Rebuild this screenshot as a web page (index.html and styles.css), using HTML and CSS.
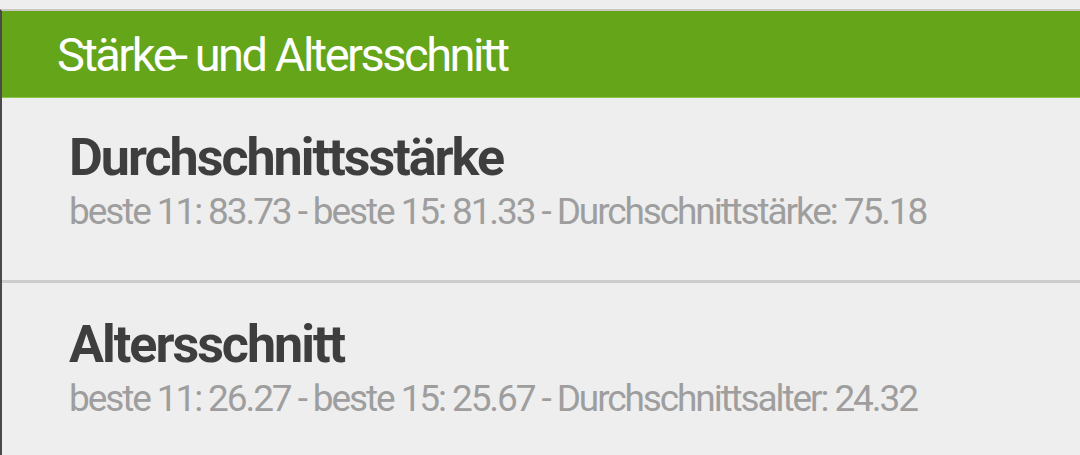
FILE: index.html
```html
<!DOCTYPE html>
<html lang="de">

<head>
    <meta charset="UTF-8">
    <meta name="viewport" content="width=device-width, initial-scale=1.0">
    <title>Stärke- und Altersschnitt</title>
    <link rel="stylesheet" href="styles.css">
</head>

<body>
    <div class="panel">
        <div class="panel-header">Stärke- und Altersschnitt</div>

        <div class="stat">
            <div class="stat-title">Durchschnittsstärke</div>
            <div class="stat-text">beste 11: 83.73 - beste 15: 81.33 - Durchschnittstärke: 75.18</div>
        </div>

        <div class="stat">
            <div class="stat-title">Altersschnitt</div>
            <div class="stat-text">beste 11: 26.27 - beste 15: 25.67 - Durchschnittsalter: 24.32</div>
        </div>
    </div>
</body>

</html>
```

FILE: styles.css
```css
body {
    height: 100vh;
    padding: 0;
    margin: 0;
    overflow: hidden;
    font-family: Roboto, "Noto Sans", sans-serif;
    background-color: #eeeeee;
}

.panel {
    margin-top: 9px;
    height: 100%;
    border-top: 2px solid #c9c9c1;
    border-left: 2px solid #4a4a4a;
}

.panel-header {
    height: 86px;
    padding-left: 55px;
    display: flex;
    align-items: center;
    font-size: 47px;
    letter-spacing: -2.5px;
    color: #ffffff;
    background-color: #64a51a;
    border-bottom: 1px solid #8cc34a;
}

.stat {
    padding: 30px 0 44px 67px;
}

.stat + .stat {
    padding-top: 32px;
    border-top: 3px solid #cccccc;
}

.stat-title {
    font-size: 52px;
    font-weight: bold;
    letter-spacing: -2px;
    line-height: 60px;
    color: #3e3e3e;
}

.stat-text {
    font-size: 37px;
    letter-spacing: -2.1px;
    line-height: 48px;
    color: #9e9e9e;
}
```
